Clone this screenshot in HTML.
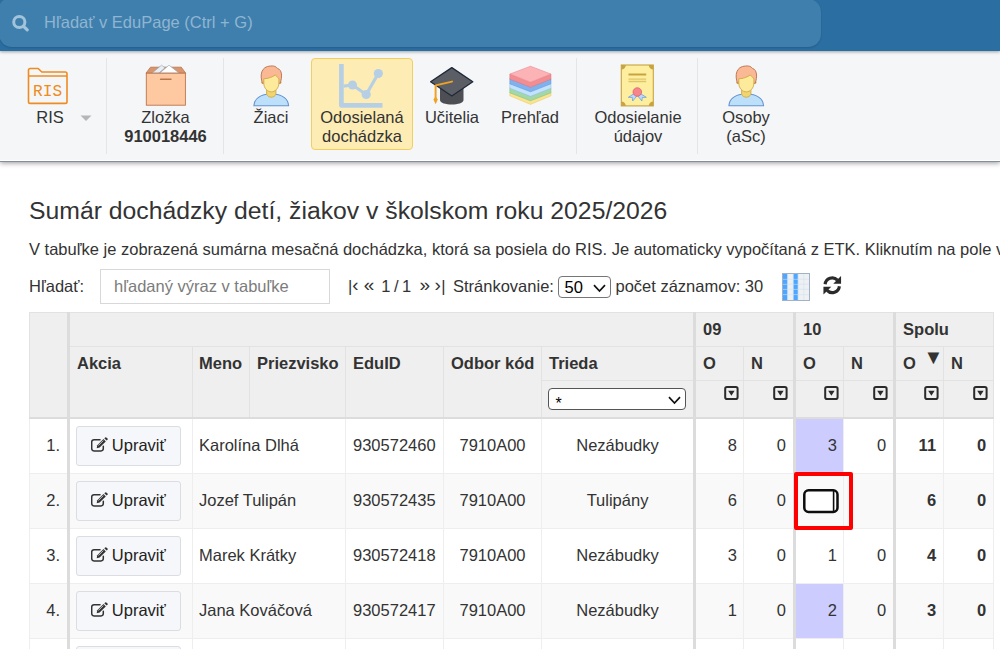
<!DOCTYPE html>
<html lang="sk"><head><meta charset="utf-8"><title>Sumár dochádzky</title>
<style>
*{box-sizing:border-box}
html,body{margin:0;padding:0}
body{width:1000px;height:649px;overflow:hidden;background:#fff;font-family:"Liberation Sans",Arial,sans-serif;color:#333;position:relative}
#top{position:absolute;left:0;top:0;width:1000px;height:51px;background:#2b6ea2;box-shadow:0 1px 3px rgba(0,0,0,.35);z-index:2}
#search{position:absolute;left:-1px;top:-1px;width:822px;height:48px;border-radius:9px 13px 13px 13px;background:#3f7fad;box-shadow:0 1px 2px rgba(0,0,0,.15)}
#search span{position:absolute;left:45px;top:13.500px;font-size:16.500px;color:#8fb5d1}
#search svg{position:absolute;left:13px;top:15px}
#tb{position:absolute;left:0;top:51px;width:1000px;height:111px;background:#f5f6f8;border-bottom:1px solid #858e99;box-shadow:0 1px 5px rgba(0,0,0,.42), inset 0 -1px 0 #fff}
.it{position:absolute;top:0;text-align:center;font-size:16.5px;line-height:19px;color:#333}
.it .lb{position:absolute;top:57px;left:0;width:100%;white-space:nowrap}
.sep{position:absolute;top:7px;width:1px;height:96px;background:#e4e5e7}
h1{position:absolute;left:29px;top:197px;margin:0;font-size:24.75px;font-weight:normal;color:#333;white-space:nowrap}
#desc{position:absolute;left:29px;top:240px;font-size:16.5px;white-space:nowrap;color:#333}
#ctl{position:absolute;left:29px;top:269px;height:35px;font-size:16.5px;white-space:nowrap}
table{position:absolute;left:29px;top:312px;border-collapse:collapse;font-size:16px}
.hl{top:6.500px !important;height:92px;background:#fdedb4;border:1px solid #f2cf5f;border-radius:4px}
#inp{position:absolute;left:71px;top:0;width:230px;height:35px;border:1px solid #d8d8d8;background:#fff}
#inp span{position:absolute;left:13px;top:7px;color:#7c7c7c}
#sel{position:absolute;left:529px;top:6.500px;width:53px;height:22px;border:1px solid #767676;border-radius:4px;background:#fff}
#sel span{position:absolute;left:5.500px;top:1px;color:#000}
table{table-layout:fixed;width:964px}
th,td{border:1px solid #e2e2e2;padding:0 7px;font-size:16.5px;overflow:hidden;white-space:nowrap}
th{background:#efefef;text-align:left;font-weight:bold;color:#333;vertical-align:top}
tr.h1 th{height:34px;padding-top:7px}
tr.h2 th{height:34px;padding-top:7px}
tr.h3 th{height:37px;padding-top:7px;border-bottom:2px solid #dcdcdc}
tr.h1 th.c0,tr.h2 th{border-bottom:2px solid #dcdcdc}
tr.h2 th.nb{border-bottom:1px solid #e2e2e2}
th.nb{border-bottom-color:#e6e6e6}
.bl{border-left:3px solid #dcdcdc !important}
tr.d td{height:55px;vertical-align:middle;border-color:#eee}
tr.d.r1 td{height:56px}
tr.d.r2 td,tr.d.r3 td,tr.d.r4 td,tr.d.r5 td{padding-bottom:2px}
tr.d td.bl{border-left-color:#dcdcdc}
tr.odd td{background:#fff}
tr.even td{background:#f9f9f9}
td.num{text-align:right;padding-right:7px}
td.r{text-align:right;padding-right:6px}
td.c{text-align:center}
td.l2{padding-left:6px}
td.b{font-weight:bold;padding-right:7px}
td.rn{padding-right:7px}
td.hl2{background:#ccccff !important}
th.dd{text-align:right;padding-right:4px;padding-top:4px !important}
.tri{font-size:20px;position:relative;top:-5.500px;left:3px;display:inline-block;line-height:10px}
.btn{display:inline-block;position:relative;left:-1px;top:.5px;width:105px;height:40px;line-height:37px;border:1px solid #dcdde3;border-radius:3px;background:#f6f7fa;text-align:center;color:#222}
.btn svg{vertical-align:-1px;margin-right:-1px}
#tsel{position:relative;left:-1px;width:137.500px;height:22px;border:1px solid #555;border-radius:4px;background:#fff;font-weight:normal}
#tsel span{position:absolute;left:6.500px;top:5.500px;color:#000;font-size:16px}
#redbox{position:absolute;left:794px;top:472px;width:59px;height:58px;border:4px solid #f00;border-radius:2px}
#ed{position:absolute;left:3.600px;top:12.400px}
.g{font-size:19px;line-height:16px !important;position:relative;top:-1px}
#ctl span{line-height:19px}
th.dd:not(.bl){padding-right:5px}
</style></head><body>
<div id="top"><div id="search">
<svg width="18" height="18" viewBox="0 0 18 18"><circle cx="7.300" cy="8" r="5.600" fill="none" stroke="#a3c3db" stroke-width="3"/><path d="M11.600 12.300l3.600 3.500" stroke="#a3c3db" stroke-width="3.200" stroke-linecap="round"/></svg>
<span>Hľadať v EduPage (Ctrl + G)</span></div></div>
<svg width="0" height="0" style="position:absolute"><defs><g id="person" transform="translate(-200,-70)"><path d="M239 508 C242 440 300 390 412 390 C525 390 583 440 586 508 Z" fill="#bde0fa" stroke="#6593cf" stroke-width="11" stroke-linejoin="round"/><path d="M366 330 L366 392 C380 432 445 432 459 392 L459 330 Z" fill="#f1d56e" stroke="#cfa94a" stroke-width="9"/><circle cx="327" cy="275" r="11" fill="#f1d56e" stroke="#cfa94a" stroke-width="8"/><circle cx="500" cy="275" r="11" fill="#f1d56e" stroke="#cfa94a" stroke-width="8"/><path d="M324 282 C296 200 312 114 405 110 C440 106 462 116 474 134 C522 146 524 220 502 282 Z" fill="#fab894" stroke="#bd7b58" stroke-width="10" stroke-linejoin="round"/><path d="M338 238 C380 238 430 218 452 200 C468 218 487 226 489 242 L489 282 C489 332 450 369 413 369 C376 369 338 332 338 282 Z" fill="#fdeb9b" stroke="#cfa94a" stroke-width="9" stroke-linejoin="round"/></g></defs></svg>
<div id="tb">
<div class="it" style="left:10px;width:80px"><svg style="position:absolute;left:17px;top:16px" width="42" height="38" viewBox="170 120 420 380"><path d="M185 152 a17 17 0 0 1 17-17 h80 l36 35 h235 a17 17 0 0 1 17 17 v280 a17 17 0 0 1-17 17 h-351 a17 17 0 0 1-17-17 z" fill="none" stroke="#ee8c22" stroke-width="16" stroke-linejoin="round"/><path d="M185 210 H570" stroke="#ee8c22" stroke-width="15"/><text x="376" y="405" text-anchor="middle" font-family="Liberation Mono, monospace" font-size="161" fill="#ee8c22">RIS</text></svg><div class="lb">RIS</div><svg style="position:absolute;left:70px;top:64px" width="12" height="7" viewBox="0 0 12 7"><path d="M0.500 0.500h11L6 6z" fill="#b4b6b9"/></svg></div>
<div class="sep" style="left:106px"></div>
<div class="it" style="left:108px;width:115px"><svg style="position:absolute;left:37px;top:13px" width="42" height="42" viewBox="300 90 420 420"><path d="M310 182 L355 122 H663 L707 182 Z" fill="#d9956b" stroke="#b9764d" stroke-width="8" stroke-linejoin="round"/><path d="M372 180 L465 102 L500 128 L440 180 Z" fill="#e9eef4" stroke="#8ea3b8" stroke-width="6" stroke-linejoin="round"/><path d="M448 180 L540 102 L640 180 Z" fill="#fff" stroke="#8ea3b8" stroke-width="6" stroke-linejoin="round"/><rect x="313" y="182" width="391" height="320" fill="#fec8a0" stroke="#b9764d" stroke-width="9"/><path d="M456 243 H560" stroke="#b9764d" stroke-width="14" stroke-linecap="round"/></svg><div class="lb">Zložka</div><div class="lb" style="top:76px;font-weight:bold">910018446</div></div>
<div class="sep" style="left:223px"></div>
<div class="it" style="left:231px;width:80px"><svg style="position:absolute;left:19px;top:11px" width="42" height="46" viewBox="0 0 420 460"><use href="#person"/></svg><div class="lb">Žiaci</div></div>
<div class="it hl" style="left:311px;width:102px"><svg style="position:absolute;left:26px;top:4.500px" width="48" height="46" viewBox="0 0 48 46"><path d="M3.400 1V42.400H44.500" fill="none" stroke="#b6cfe5" stroke-width="4.700" stroke-linejoin="round"/><path d="M5.500 23.200L14.500 22 28.200 31.500 40.300 10.500" fill="none" stroke="#b6cfe5" stroke-width="3.200" stroke-linejoin="round"/><circle cx="14.500" cy="22" r="4.500" fill="#b6cfe5"/><circle cx="28.200" cy="31.500" r="4.600" fill="#b6cfe5"/><circle cx="40.300" cy="10.500" r="4.600" fill="#b6cfe5"/></svg><div class="lb" style="top:49.500px">Odosielaná<br>dochádzka</div></div>
<div class="it" style="left:413px;width:78px"><svg style="position:absolute;left:16px;top:15px" width="46" height="40" viewBox="190 110 460 400"><path d="M300 320 V450 C300 510 535 510 535 450 V320 Z" fill="#4d4f54"/><path d="M418 126 L628 268 L418 410 L206 268 Z" fill="#5b5e64" stroke="#1f2a38" stroke-width="13" stroke-linejoin="round"/><path d="M420 266 L256 304 V440" fill="none" stroke="#f0a224" stroke-width="20" stroke-linejoin="round" stroke-linecap="round"/><path d="M256 415 L278 445 L256 493 L234 445 Z" fill="#f0a224"/></svg><div class="lb">Učitelia</div></div>
<div class="it" style="left:491px;width:78px"><svg style="position:absolute;left:18px;top:14px" width="43" height="40" viewBox="190 100 430 400"><path d="M198 375 V408 L405 494 L610 408 V375 L405 455 Z" fill="#fbe48c" stroke="#e6c860" stroke-width="5"/><path d="M198 328 V378 L405 458 L610 378 V328 L405 410 Z" fill="#a3d7a8" stroke="#7fbf8a" stroke-width="5"/><path d="M198 285 V332 L405 413 L610 332 V285 L405 365 Z" fill="#c2e2fd" stroke="#8fc0ee" stroke-width="5"/><path d="M198 238 V288 L405 368 L610 288 V238 L405 320 Z" fill="#7fb1ee" stroke="#5f97df" stroke-width="5"/><path d="M198 190 V241 L405 322 L610 241 V190 L405 272 Z" fill="#f28d92" stroke="#e4727a" stroke-width="5"/><path d="M405 112 L608 190 L405 272 L200 190 Z" fill="#fbb3b6" stroke="#ee8a90" stroke-width="6" stroke-linejoin="round"/></svg><div class="lb">Prehľad</div></div>
<div class="sep" style="left:576px"></div>
<div class="it" style="left:578px;width:120px"><svg style="position:absolute;left:42px;top:13.100px" width="34.500" height="43" viewBox="305 95 345 430"><rect x="318" y="105" width="320" height="409" fill="#fdeea0" stroke="#c8a440" stroke-width="11"/><path d="M318 105h45a45 45 0 0 1-45 45zM638 105v45a45 45 0 0 1-45-45zM318 514v-45a45 45 0 0 1 45 45zM638 514h-45a45 45 0 0 1 45-45z" fill="#c8a440"/><path d="M390 200H567" stroke="#c8a440" stroke-width="20"/><path d="M390 246H567M390 270H567" stroke="#e0c668" stroke-width="14"/><path d="M440 395 L388 428 L428 430 L432 465 L478 410 Z" fill="#b9dafa" stroke="#4f8fe0" stroke-width="6" stroke-linejoin="round"/><path d="M516 395 L568 428 L528 430 L524 465 L478 410 Z" fill="#b9dafa" stroke="#4f8fe0" stroke-width="6" stroke-linejoin="round"/><circle cx="478" cy="375" r="43" fill="#f4868c" stroke="#e25762" stroke-width="7"/></svg><div class="lb">Odosielanie<br>údajov</div></div>
<div class="sep" style="left:697px"></div>
<div class="it" style="left:699px;width:94px"><svg style="position:absolute;left:25.800px;top:11px" width="42" height="46" viewBox="0 0 420 460"><use href="#person"/></svg><div class="lb">Osoby<br>(aSc)</div></div>
</div>
<h1>Sumár dochádzky detí, žiakov v školskom roku 2025/2026</h1>
<div id="desc">V tabuľke je zobrazená sumárna mesačná dochádzka, ktorá sa posiela do RIS. Je automaticky vypočítaná z ETK. Kliknutím na pole v tabuľke</div>
<div id="ctl">
<span style="position:absolute;left:0;top:8px">Hľadať:</span>
<div id="inp"><span>hľadaný výraz v tabuľke</span></div>
<span style="position:absolute;left:319px;top:8px">|<span class="g">‹</span></span><span class="g" style="position:absolute;left:334.800px;top:8px">«</span><span style="position:absolute;left:352.200px;top:8px;word-spacing:-1px">1 / 1</span><span class="g" style="position:absolute;left:390.400px;top:8px">»</span><span style="position:absolute;left:405.500px;top:8px"><span class="g">›</span><span style="margin-left:.5px">|</span></span>
<span style="position:absolute;left:424px;top:8px">Stránkovanie:</span>
<div id="sel"><span>50</span><svg width="13" height="9" viewBox="0 0 13 9" style="position:absolute;right:4px;top:7px"><path d="M1 1.200L6.500 7l5.500-5.800" fill="none" stroke="#111" stroke-width="1.700"/></svg></div>
<span style="position:absolute;left:586.500px;top:8px">počet záznamov: 30</span>
<svg style="position:absolute;left:752.600px;top:4.300px" width="28" height="28" viewBox="0 0 28 28"><rect x=".5" y=".5" width="27" height="27" fill="#eef0f1" stroke="#9fb2c8"/><rect x="1" y="1" width="4.600" height="26" fill="#4da6ff"/><rect x="11.200" y="1" width="4.900" height="26" fill="#4da6ff"/><path d="M5.600 1v26M11.200 1v26M16.100 1v26M21.700 1v26" stroke="#d9e6f2" stroke-width=".7"/><path d="M1 6.300h26M1 11.300h26M1 16.400h26M1 21.600h26" stroke="#cfe2f5" stroke-width=".8" opacity=".75"/></svg>
<svg style="position:absolute;left:793px;top:5.600px" width="20.500" height="20.500" viewBox="0 0 21 21"><path d="M3.200 9.500a7.300 7.300 0 0 1 12.600-4.200" fill="none" stroke="#2b2b2b" stroke-width="3.200"/><path d="M19.500 1v8h-8z" fill="#2b2b2b"/><path d="M17.800 11.500a7.300 7.300 0 0 1-12.600 4.200" fill="none" stroke="#2b2b2b" stroke-width="3.200"/><path d="M1.500 20v-8h8z" fill="#2b2b2b"/></svg>
</div>
<table><colgroup><col style="width:39px"><col style="width:124px"><col style="width:57px"><col style="width:96px"><col style="width:98px"><col style="width:98px"><col style="width:153px"><col style="width:49px"><col style="width:51px"><col style="width:49px"><col style="width:51px"><col style="width:49px"><col style="width:50px"></colgroup>
<tr class="h1"><th rowspan="3" class="c0"></th><th colspan="6" class="bl"></th><th colspan="2" class="bl">09</th><th colspan="2" class="bl">10</th><th colspan="2" class="bl">Spolu</th></tr>
<tr class="h2"><th rowspan="2" class="bl">Akcia</th><th rowspan="2" style="padding-left:6px">Meno</th><th rowspan="2">Priezvisko</th><th rowspan="2">EduID</th><th rowspan="2">Odbor kód</th><th class="nb">Trieda</th><th class="bl nb">O</th><th class="nb">N</th><th class="bl nb">O</th><th class="nb">N</th><th class="bl nb">O <span class="tri">▼</span></th><th class="nb">N</th></tr>
<tr class="h3"><th><div id="tsel"><span>*</span><svg width="13" height="9" viewBox="0 0 13 9" style="position:absolute;right:4px;top:7px"><path d="M1 1.200L6.500 7l5.500-5.800" fill="none" stroke="#111" stroke-width="1.700"/></svg></div></th><th class="dd bl"><svg width="15" height="14" viewBox="0 0 15 14"><rect x="1.200" y="1" width="12.400" height="12" rx="1.800" fill="none" stroke="#2a2a2a" stroke-width="2"/><path d="M4.200 4.800h6.400L7.400 9.800z" fill="#2a2a2a"/></svg></th><th class="dd"><svg width="15" height="14" viewBox="0 0 15 14"><rect x="1.200" y="1" width="12.400" height="12" rx="1.800" fill="none" stroke="#2a2a2a" stroke-width="2"/><path d="M4.200 4.800h6.400L7.400 9.800z" fill="#2a2a2a"/></svg></th><th class="dd bl"><svg width="15" height="14" viewBox="0 0 15 14"><rect x="1.200" y="1" width="12.400" height="12" rx="1.800" fill="none" stroke="#2a2a2a" stroke-width="2"/><path d="M4.200 4.800h6.400L7.400 9.800z" fill="#2a2a2a"/></svg></th><th class="dd"><svg width="15" height="14" viewBox="0 0 15 14"><rect x="1.200" y="1" width="12.400" height="12" rx="1.800" fill="none" stroke="#2a2a2a" stroke-width="2"/><path d="M4.200 4.800h6.400L7.400 9.800z" fill="#2a2a2a"/></svg></th><th class="dd bl"><svg width="15" height="14" viewBox="0 0 15 14"><rect x="1.200" y="1" width="12.400" height="12" rx="1.800" fill="none" stroke="#2a2a2a" stroke-width="2"/><path d="M4.200 4.800h6.400L7.400 9.800z" fill="#2a2a2a"/></svg></th><th class="dd"><svg width="15" height="14" viewBox="0 0 15 14"><rect x="1.200" y="1" width="12.400" height="12" rx="1.800" fill="none" stroke="#2a2a2a" stroke-width="2"/><path d="M4.200 4.800h6.400L7.400 9.800z" fill="#2a2a2a"/></svg></th></tr>
<tr class="d r1 odd"><td class="c0 num">1.</td><td class="bl"><span class="btn"><svg width="17" height="15" viewBox="0 0 17 15"><path d="M12.300 9.200v2.400a2.300 2.300 0 0 1-2.300 2.300H3a2.300 2.300 0 0 1-2.300-2.300V5a2.300 2.300 0 0 1 2.300-2.300h6" fill="none" stroke="#333" stroke-width="1.500" stroke-linecap="round"/><path d="M6.300 8.300l6.200-6.200 2.300 2.300-6.200 6.200-2.900.6z" fill="#333"/><path d="M13.300 1.300l.9-.9a.8.8 0 0 1 1.100 0l1.200 1.200a.8.8 0 0 1 0 1.100l-.9.900z" fill="#333"/><path d="M7.300 8.600l5-5" stroke="#f6f7fa" stroke-width=".7"/></svg> Upraviť</span></td><td colspan="2" class="l l2">Karolína Dlhá</td><td class="l">930572460</td><td class="c">7910A00</td><td class="c">Nezábudky</td><td class="bl r">8</td><td class="r rn">0</td><td class="bl hl2 r">3</td><td class="r rn">0</td><td class="bl r b">11</td><td class="r b">0</td></tr>
<tr class="d r2 even"><td class="c0 num">2.</td><td class="bl"><span class="btn"><svg width="17" height="15" viewBox="0 0 17 15"><path d="M12.300 9.200v2.400a2.300 2.300 0 0 1-2.300 2.300H3a2.300 2.300 0 0 1-2.300-2.300V5a2.300 2.300 0 0 1 2.300-2.300h6" fill="none" stroke="#333" stroke-width="1.500" stroke-linecap="round"/><path d="M6.300 8.300l6.200-6.200 2.300 2.300-6.200 6.200-2.900.6z" fill="#333"/><path d="M13.300 1.300l.9-.9a.8.8 0 0 1 1.100 0l1.200 1.200a.8.8 0 0 1 0 1.100l-.9.900z" fill="#333"/><path d="M7.300 8.600l5-5" stroke="#f6f7fa" stroke-width=".7"/></svg> Upraviť</span></td><td colspan="2" class="l l2">Jozef Tulipán</td><td class="l">930572435</td><td class="c">7910A00</td><td class="c">Tulipány</td><td class="bl r">6</td><td class="r rn">0</td><td class="bl r"></td><td class="r rn"></td><td class="bl r b">6</td><td class="r b">0</td></tr>
<tr class="d r3 odd"><td class="c0 num">3.</td><td class="bl"><span class="btn"><svg width="17" height="15" viewBox="0 0 17 15"><path d="M12.300 9.200v2.400a2.300 2.300 0 0 1-2.300 2.300H3a2.300 2.300 0 0 1-2.300-2.300V5a2.300 2.300 0 0 1 2.300-2.300h6" fill="none" stroke="#333" stroke-width="1.500" stroke-linecap="round"/><path d="M6.300 8.300l6.200-6.200 2.300 2.300-6.200 6.200-2.900.6z" fill="#333"/><path d="M13.300 1.300l.9-.9a.8.8 0 0 1 1.100 0l1.200 1.200a.8.8 0 0 1 0 1.100l-.9.900z" fill="#333"/><path d="M7.300 8.600l5-5" stroke="#f6f7fa" stroke-width=".7"/></svg> Upraviť</span></td><td colspan="2" class="l l2">Marek Krátky</td><td class="l">930572418</td><td class="c">7910A00</td><td class="c">Nezábudky</td><td class="bl r">3</td><td class="r rn">0</td><td class="bl r">1</td><td class="r rn">0</td><td class="bl r b">4</td><td class="r b">0</td></tr>
<tr class="d r4 even"><td class="c0 num">4.</td><td class="bl"><span class="btn"><svg width="17" height="15" viewBox="0 0 17 15"><path d="M12.300 9.200v2.400a2.300 2.300 0 0 1-2.300 2.300H3a2.300 2.300 0 0 1-2.300-2.300V5a2.300 2.300 0 0 1 2.300-2.300h6" fill="none" stroke="#333" stroke-width="1.500" stroke-linecap="round"/><path d="M6.300 8.300l6.200-6.200 2.300 2.300-6.200 6.200-2.900.6z" fill="#333"/><path d="M13.300 1.300l.9-.9a.8.8 0 0 1 1.100 0l1.200 1.200a.8.8 0 0 1 0 1.100l-.9.900z" fill="#333"/><path d="M7.300 8.600l5-5" stroke="#f6f7fa" stroke-width=".7"/></svg> Upraviť</span></td><td colspan="2" class="l l2">Jana Kováčová</td><td class="l">930572417</td><td class="c">7910A00</td><td class="c">Nezábudky</td><td class="bl r">1</td><td class="r rn">0</td><td class="bl hl2 r">2</td><td class="r rn">0</td><td class="bl r b">3</td><td class="r b">0</td></tr>
<tr class="d r5 odd"><td class="c0 num">5.</td><td class="bl"><span class="btn"><svg width="17" height="15" viewBox="0 0 17 15"><path d="M12.300 9.200v2.400a2.300 2.300 0 0 1-2.300 2.300H3a2.300 2.300 0 0 1-2.300-2.300V5a2.300 2.300 0 0 1 2.300-2.300h6" fill="none" stroke="#333" stroke-width="1.500" stroke-linecap="round"/><path d="M6.300 8.300l6.200-6.200 2.300 2.300-6.200 6.200-2.900.6z" fill="#333"/><path d="M13.300 1.300l.9-.9a.8.8 0 0 1 1.100 0l1.200 1.200a.8.8 0 0 1 0 1.100l-.9.900z" fill="#333"/><path d="M7.300 8.600l5-5" stroke="#f6f7fa" stroke-width=".7"/></svg> Upraviť</span></td><td colspan="2" class="l l2"></td><td class="l"></td><td class="c"></td><td class="c"></td><td class="bl r"></td><td class="r rn"></td><td class="bl r"></td><td class="r rn"></td><td class="bl r b"></td><td class="r b"></td></tr>
</table>
<div id="redbox"><svg id="ed" width="38" height="27" viewBox="0 0 38 27"><rect x="1" y="1" width="35.800" height="24.400" rx="6" fill="#fff" fill-opacity=".7"/><rect x="2.300" y="2.300" width="33.200" height="21.600" rx="4.300" fill="#fff" stroke="#0d0d0d" stroke-width="2.500"/><path d="M31.600 3v20" stroke="#0d0d0d" stroke-width="1.600"/></svg></div>
</body></html>
